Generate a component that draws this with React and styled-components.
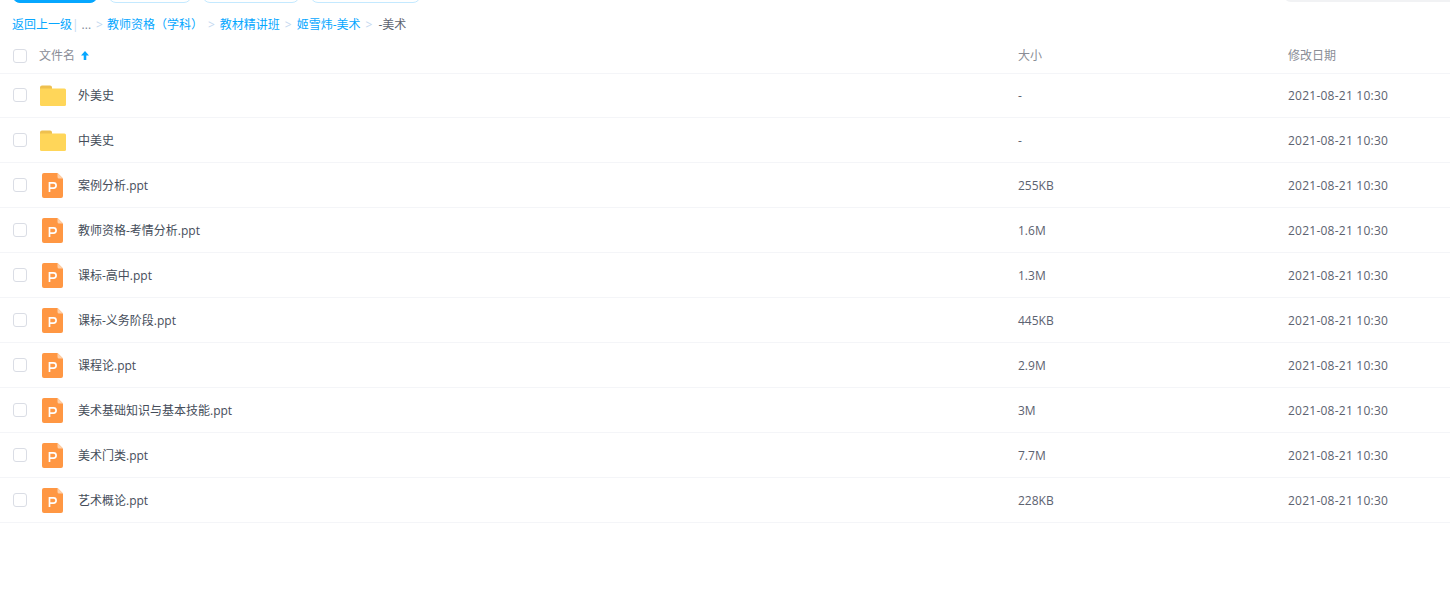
import React from "react";
import styled, { createGlobalStyle } from "styled-components";

const Global = createGlobalStyle`
  html, body { margin: 0; padding: 0; background: #fff; overflow: hidden; }
  body { font-family: "Open Sans", "Noto Sans CJK SC", sans-serif; font-size: 12px; }
`;
const Page = styled.div`width: 1450px; height: 589px; overflow: hidden; background: #fff;`;
const Toolbar = styled.div`
  height: 3px; display: flex; align-items: flex-end; overflow: hidden;
  padding: 0 0 0 12px; gap: 10px;
`;
const ToolButton = styled.div`
  flex: none; width: ${p => p.$w}px; height: 32px; box-sizing: border-box;
  border-radius: 8px;
  background: ${p => (p.$primary ? "#06a7ff" : "#fff")};
  border: 1px solid ${p => (p.$primary ? "#06a7ff" : "#c4e9ff")};
`;
const SearchStub = styled.div`
  flex: none; width: 167px; height: 32px; margin-left: auto; margin-bottom: 1px;
  border-radius: 8px 0 0 8px; background: #f1f2f4;
`;
const Crumbs = styled.div`
  height: 18px; margin-top: 13px; padding-left: 12px; display: flex; align-items: center;
  line-height: 18px; color: #06a7ff; white-space: nowrap;
`;
const CrumbLink = styled.span`color: #06a7ff;`;
const Pipe = styled.span`color: #c4d8f0; margin: 0 3px 0 0;`;
const Dots = styled.span`color: #818999;`;
const Sep = styled.span`color: #c4d8f0; margin: ${p => p.$m || "0 5px"};`;
const Current = styled.span`color: #5d6470;`;
const Row = styled.div`
  display: grid; grid-template-columns: 1018px 270px 1fr; align-items: center;
  height: ${p => (p.$head ? 36 : 44)}px;
  padding-top: ${p => (p.$head ? 3 : 0)}px;
  margin-bottom: ${p => (p.$head ? -1 : 0)}px;
  border-bottom: 1px solid #f4f5f8;
  color: ${p => (p.$head ? "#8a8d96" : "#5c6270")};
`;
const NameCell = styled.div`display: flex; align-items: center; padding-left: 13px;`;
const Check = styled.span`
  flex: none; box-sizing: border-box; width: 14px; height: 14px;
  border: 1px solid #dadde5; border-radius: 3px; background: #fff; margin-right: 12px;
  margin-top: ${p => (p.$head ? 2 : 0)}px;
`;
const IconBox = styled.span`
  flex: none; width: 28px; height: 28px; margin-right: 11px; display: flex;
  align-items: center; justify-content: center;
`;
const Name = styled.span`color: #454d5a;`;
const HeadName = styled.span`display: flex; align-items: center; gap: 6px; color: #8a8d96;`;
const Cell = styled.div``;
const DateCell = styled.div`letter-spacing: ${p => (p.$head ? 0 : "0.02em")};`;

const Folder = () => (
  <svg width="26" height="22" viewBox="0 -1 26 22">
    <path d="M0 2.5A2 2 0 0 1 2 .5h8a2 2 0 0 1 2 2V6H0z" fill="#eec04f" />
    <path d="M0 3.5h24.5a1.5 1.5 0 0 1 1.5 1.5v14.5a1.5 1.5 0 0 1-1.5 1.5H1.5A1.5 1.5 0 0 1 0 19.5z" fill="#ffd659" />
  </svg>
);
const Ppt = () => (
  <svg width="22" height="26" viewBox="0 -1 22 26">
    <path d="M2 0h13.5L21 5.5V23a2 2 0 0 1-2 2H2a2 2 0 0 1-2-2V2a2 2 0 0 1 2-2z" fill="#ff9743" />
    <path d="M15.5 0L21 5.5h-4a1.5 1.5 0 0 1-1.5-1.5z" fill="#ffd0a8" />
    <path d="M7.5 19V9.9h4a2.6 2.6 0 0 1 0 5.2H7.5" fill="none" stroke="#fff" strokeWidth="1.7" />
  </svg>
);
const Arrow = () => (
  <svg width="8" height="9" viewBox="0 0 10 10" preserveAspectRatio="none">
    <path d="M5 0L10 5H6.6v5H3.4V5H0z" fill="#06a7ff" />
  </svg>
);

const files = [
  ["外美史", "-", 1],
  ["中美史", "-", 1],
  ["案例分析.ppt", "255KB"],
  ["教师资格-考情分析.ppt", "1.6M"],
  ["课标-高中.ppt", "1.3M"],
  ["课标-义务阶段.ppt", "445KB"],
  ["课程论.ppt", "2.9M"],
  ["美术基础知识与基本技能.ppt", "3M"],
  ["美术门类.ppt", "7.7M"],
  ["艺术概论.ppt", "228KB"],
];

export default function App() {
  return (
    <Page>
      <Global />
      <Toolbar>
        <ToolButton $primary $w={86} />
        <ToolButton $w={84} />
        <ToolButton $w={98} />
        <ToolButton $w={111} />
        <SearchStub />
      </Toolbar>
      <Crumbs>
        <CrumbLink>返回上一级</CrumbLink>
        <Pipe>|</Pipe>
        <Dots>...</Dots>
        <Sep $m="0 4px 0 5px">&gt;</Sep>
        <CrumbLink>教师资格（学科）</CrumbLink>
        <Sep>&gt;</Sep>
        <CrumbLink>教材精讲班</CrumbLink>
        <Sep>&gt;</Sep>
        <CrumbLink>姬雪炜-美术</CrumbLink>
        <Sep $m="0 6px 0 5px">&gt;</Sep>
        <Current>-美术</Current>
      </Crumbs>
      <Row $head>
        <NameCell>
          <Check $head />
          <HeadName>文件名<Arrow /></HeadName>
        </NameCell>
        <Cell>大小</Cell>
        <DateCell $head>修改日期</DateCell>
      </Row>
      {files.map(([name, size, folder]) => (
        <Row key={name}>
          <NameCell>
            <Check />
            <IconBox>{folder ? <Folder /> : <Ppt />}</IconBox>
            <Name>{name}</Name>
          </NameCell>
          <Cell>{size}</Cell>
          <DateCell>2021-08-21 10:30</DateCell>
        </Row>
      ))}
    </Page>
  );
}
